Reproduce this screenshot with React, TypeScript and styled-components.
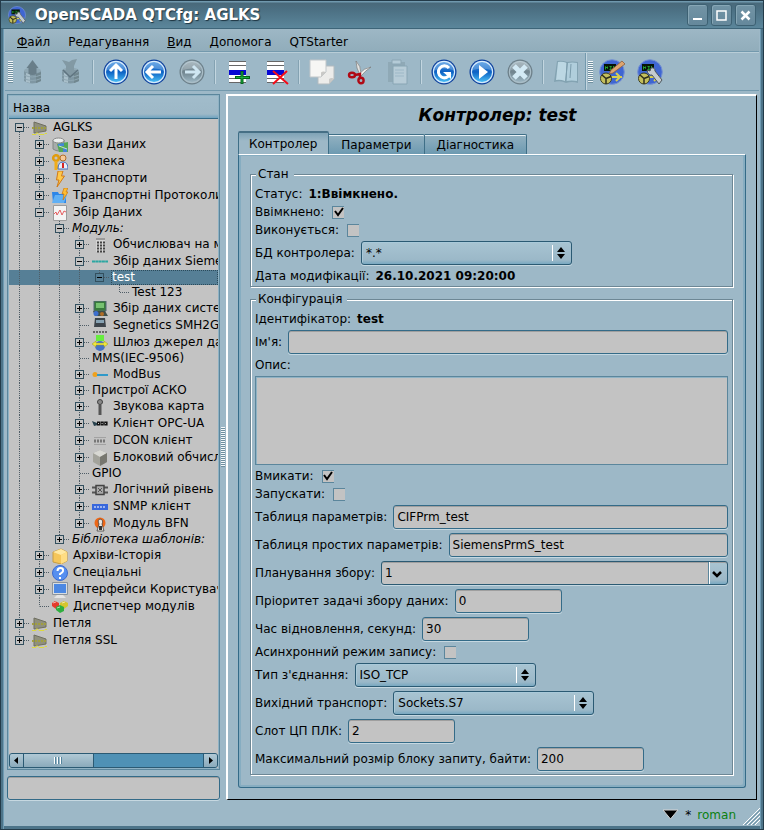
import React from 'react';
import styled, { createGlobalStyle, css } from 'styled-components';

const c = {
  face: '#9db8c7',
  field: '#c3c3c3',
  line: '#5b869c',
  edge: '#346b88',
  deep: '#2b5a73',
  select: '#567f96',
};

const GlobalStyle = createGlobalStyle`
  *, *::before, *::after { box-sizing: border-box; }
  body { margin: 0; background: ${c.face}; }
  body, button, input, select, textarea {
    font-family: "DejaVu Sans", Verdana, sans-serif;
    font-size: 12px;
    color: #000;
  }
  button { padding: 0; border: 0; background: none; }
`;

const Frame = styled.div`
  display: flex;
  flex-direction: column;
  min-height: 100vh;
  padding: 0 4px 4px;
  background: ${c.face};
  border: 1px solid #233b49;
  box-shadow: inset 2px 0 #4d7489, inset 3px 0 #6e9bb3, inset -2px 0 #4d7489, inset -3px 0 #6e9bb3,
    inset 0 -3px #4d7489;
`;

const TitleBar = styled.header`
  display: flex;
  align-items: center;
  gap: 9px;
  height: 28px;
  margin: 0 -4px;
  padding: 0 7px;
  background: linear-gradient(#6f98ad 0 1px, #49697a 2px, #4b6f82 8px, #5b869b 27px, #3e6579 27px);
`;

const Title = styled.h1`
  flex: 1;
  margin: 0;
  font-size: 15px;
  font-weight: bold;
  line-height: 24px;
  color: #fff;
  text-shadow: 1px 1px 1px #1d3441;
`;

const WindowButtons = styled.div`
  display: flex;
  gap: 3px;
`;

const WindowButton = styled.button`
  display: grid;
  place-items: center;
  width: 21px;
  height: 22px;
  border: 1px solid #3d6173;
  border-radius: 3px;
  background: linear-gradient(#7294a5, #65889b);
  box-shadow: inset 1px 1px #86a6b5;
`;

const MenuBar = styled.nav`
  display: flex;
  align-items: center;
  gap: 18px;
  height: 23px;
  padding: 3px 12px 0;
  background: linear-gradient(#9db7c5, #91adbb);
  border-bottom: 1px solid #7399ad;
`;

const MenuItem = styled.button<{ $plain?: boolean }>`
  line-height: 16px;
  &::first-letter { text-decoration: ${(p) => (p.$plain ? 'none' : 'underline')}; }
`;

const ToolArea = styled.div`
  display: flex;
  height: 39px;
  border-top: 1px solid #b8cdd7;
  border-bottom: 1px solid #7399ad;
`;

const ToolBar = styled.div`
  display: flex;
  align-items: center;
  padding-left: 3px;
  & + & { padding-left: 2px; border-left: 1px solid #7399ad; box-shadow: inset 1px 0 #c3d6e0; }
`;

const ToolHandle = styled.span`
  width: 5px;
  height: 22px;
  background: repeating-linear-gradient(#f4f8fa 0 1px, #6f8f9f 1px 2px);
`;

const ToolButton = styled.button`
  display: grid;
  place-items: center;
  width: 38px;
  height: 34px;
  svg { width: 26px; height: 26px; }
`;

const ToolSeparator = styled.span`
  width: 2px;
  height: 24px;
  margin: 0 3px;
  border-left: 1px solid #84a2b2;
  border-right: 1px solid #c3d6e0;
`;

const Body = styled.main`
  flex: 1;
  display: grid;
  grid-template-columns: minmax(180px, 213px) 6px minmax(0, 1fr);
  padding: 3px 2px 0 2px;
`;

const SidePane = styled.aside`
  display: flex;
  flex-direction: column;
  gap: 6px;
  min-width: 0;
`;

const TreeBox = styled.div`
  flex: 1;
  display: flex;
  flex-direction: column;
  background: ${c.field};
  border: 1px solid ${c.line};
  box-shadow: inset 0 0 0 1px #8fb2c4;
  padding: 1px;
`;

const TreeHeader = styled.div`
  height: 23px;
  padding-left: 4px;
  line-height: 24px;
  background: linear-gradient(#a1bccb, #9db8c7 18px, #6fa3bf 22px, ${c.edge} 22px);
`;

const TreeRows = styled.div`
  flex: 1;
  overflow: hidden;
`;

const TreeRow = styled.div<{ $selected?: boolean; $tall?: boolean }>`
  display: flex;
  align-items: center;
  height: ${(p) => (p.$tall ? 17 : 15)}px;
  white-space: nowrap;
  ${(p) => p.$selected && css`background: ${c.select}; color: #fff;`}
`;

const dotsDown = 'repeating-linear-gradient(#4f5d66 0 1px, transparent 1px 2px)';
const dotsAcross = 'repeating-linear-gradient(90deg, #4f5d66 0 1px, transparent 1px 2px)';

type GuideKind = 'none' | 'through' | 'mid' | 'last' | 'first';

const Guide = styled.span<{ $kind: GuideKind }>`
  flex: none;
  display: grid;
  place-items: center start;
  width: 20px;
  height: 100%;
  padding-left: 6px;
  background-repeat: no-repeat;
  ${(p) => p.$kind === 'through' && css`
    background-image: ${dotsDown};
    background-size: 1px 100%;
    background-position: 10px 0;
  `}
  ${(p) => (p.$kind === 'mid' || p.$kind === 'last' || p.$kind === 'first') && css`
    background-image: ${dotsDown}, ${dotsAcross};
    background-size: 1px ${p.$kind === 'mid' ? '100%' : '50%'}, 9px 1px;
    background-position: 10px ${p.$kind === 'first' ? '100%' : '0'}, 11px 50%;
  `}
`;

const Expander = styled.button<{ $selected?: boolean }>`
  display: grid;
  place-items: center;
  width: 9px;
  height: 9px;
  background: ${(p) => (p.$selected ? c.select : c.field)};
  border: 1px solid #33505f;
`;

const TreeIcon = styled.svg`
  flex: none;
  width: 16px;
  height: 16px;
  margin: 0 2px 0 3px;
`;

const TreeLabel = styled.span<{ $italic?: boolean; $selected?: boolean }>`
  flex: 1;
  height: 15px;
  margin-left: 2px;
  padding-left: 1px;
  line-height: 15px;
  font-style: ${(p) => (p.$italic ? 'italic' : 'normal')};
  ${(p) => p.$selected && css`outline: 1px dotted #2b4a5a; outline-offset: -1px;`}
`;

const ScrollBar = styled.div`
  display: flex;
  height: 15px;
  border: 1px solid ${c.deep};
  border-radius: 3px;
  background: #4f91b5;
  overflow: hidden;
`;

const ScrollArrow = styled.button`
  display: grid;
  place-items: center;
  width: 14px;
  background: linear-gradient(#b1c9d5, #8aaabb);
  border: solid ${c.deep};
  border-width: 0 0 0 1px;
  &:first-child { border-width: 0 1px 0 0; }
`;

const ScrollThumb = styled.button`
  display: grid;
  place-items: center;
  width: 34%;
  background: linear-gradient(#b1c9d5, #8aaabb);
  border-right: 1px solid ${c.deep};
`;

const ScrollSpace = styled.span`
  flex: 1;
`;

const fieldFrame = css`
  height: 24px;
  border: 1px solid ${c.edge};
  border-radius: 3px;
  background: ${c.field};
  box-shadow: inset 0 1px #9f9f9f, 0 1px #c6d8e1;
  outline: 0;
`;

const TextInput = styled.input<{ $short?: boolean }>`
  ${fieldFrame}
  min-width: 0;
  padding: 0 3px;
  ${(p) => (p.$short ? css`width: 107px;` : css`flex: 1;`)}
`;

const Splitter = styled.div`
  display: grid;
  place-items: center;
  &::before {
    content: '';
    width: 4px;
    height: 40px;
    background: repeating-linear-gradient(#f4f8fa 0 1px, #6f8f9f 1px 2px);
  }
`;

const Page = styled.section`
  min-width: 0;
  padding: 6px 10px 9px 10px;
  border: 2px solid #fff;
  border-right: 1px solid #000;
  border-bottom: 1px solid #000;
`;

const PageTitle = styled.h2`
  margin: 0 0 3px;
  padding-left: 11px;
  text-align: center;
  font-size: 17px;
  font-style: italic;
  line-height: 26px;
`;

const Tabs = styled.div`
  display: flex;
  align-items: flex-end;
  height: 23px;
`;

const Tab = styled.button<{ $active?: boolean }>`
  height: 20px;
  padding: 0 12px;
  line-height: 18px;
  background: linear-gradient(#92b1c1, #6d9ab1);
  border: solid #3f6f87;
  border-width: 1px 1px 0 0;
  border-radius: 0 2px 0 0;
  box-shadow: inset 0 1px #e9f1f5;
  ${(p) => p.$active && css`
    height: 23px;
    padding: 0 11px 0 10px;
    border-width: 2px 1px 0 1px;
    border-top-color: #466f85;
    border-radius: 2px 2px 0 0;
    background: linear-gradient(#7fa3b6, ${c.face} 8px);
    box-shadow: none;
  `}
`;

const Pane = styled.div`
  display: flex;
  flex-direction: column;
  gap: 4px;
  padding: 11px 12px 12px 11px;
  border: 1px solid ${c.edge};
  border-radius: 0 0 3px 3px;
  border-top-color: #fff;
  box-shadow: inset 2px 1px #86adc1, inset -2px -2px #86adc1;
`;

const Group = styled.fieldset`
  display: flex;
  flex-direction: column;
  gap: 4px;
  min-width: 0;
  margin: 0;
  padding: 5px 4px 3px;
  border: 1px solid #6d8795;
  box-shadow: inset 1px 1px #fff, 1px 1px #fff;
`;

const Legend = styled.legend`
  margin-left: 1px;
  padding: 0 5px 0 2px;
  line-height: 16px;
  background: ${c.face};
`;

const FormRow = styled.div<{ $tall?: boolean }>`
  display: flex;
  align-items: center;
  gap: 6px;
  height: ${(p) => (p.$tall ? 24 : 14)}px;
  white-space: nowrap;
`;

const Value = styled.output`
  font-weight: bold;
`;

const CheckWrap = styled.span`
  display: grid;
  place-items: center;
  margin-left: 2px;
  > * { grid-area: 1 / 1; }
  svg { pointer-events: none; visibility: hidden; }
  input:checked + svg { visibility: visible; }
`;

const Check = styled.input`
  appearance: none;
  width: 12px;
  height: 13px;
  margin: 0;
  background: ${c.field};
  border: solid ${c.line};
  border-width: 1px 0 1px 1px;
`;

const SelectWrap = styled.span<{ $width: number }>`
  display: grid;
  grid-template-columns: minmax(0, 1fr) 20px;
  align-items: center;
  ${(p) => (p.$width ? css`width: ${p.$width}px;` : css`flex: 1;`)}
  select { grid-area: 1 / 1 / 2 / 3; }
  svg { grid-area: 1 / 2; pointer-events: none; }
`;

const Choice = styled.select<{ $editable?: boolean }>`
  ${fieldFrame}
  appearance: none;
  width: 100%;
  padding: 0 22px 0 4px;
  border-color: ${c.deep};
  ${(p) => (p.$editable
    ? css`padding-left: 3px; background: linear-gradient(#a9c4d1, #9db8c7 18px, #78a8c1) right / 19px 100% no-repeat, ${c.field};`
    : css`background: linear-gradient(#a8c4d2, #9bb8c8 18px, #78a8c1); box-shadow: inset 1px 1px #a9c9d9, 0 1px #c6d8e1;`)}
`;

const Memo = styled.textarea`
  height: 89px;
  padding: 3px;
  resize: none;
  background: ${c.field};
  border: 1px solid ${c.line};
  box-shadow: inset 1px 1px #8fb2c4;
  outline: 0;
`;

const StatusBar = styled.footer`
  display: flex;
  align-items: center;
  justify-content: flex-end;
  gap: 6px;
  height: 25px;
  padding-top: 4px;
`;

const UserButton = styled.button`
  color: #0b800f;
  line-height: 20px;
`;

const Grip = styled.svg`
  align-self: flex-end;
  margin-right: -1px;
`;

/* ---------- toolbar drawings ---------- */

const Disc = ({ id, grey, children }: { id: string; grey?: boolean; children: React.ReactNode }) => (
  <svg viewBox="0 0 26 26" aria-hidden="true">
    <defs>
      <linearGradient id={id} x1="0" y1="0" x2="0" y2="1">
        <stop offset="0" stopColor={grey ? '#8fa3ad' : '#3d8ee0'} />
        <stop offset=".5" stopColor={grey ? '#70848e' : '#0d62c4'} />
        <stop offset="1" stopColor={grey ? '#9bb5c2' : '#49bdf4'} />
      </linearGradient>
    </defs>
    <circle cx="13" cy="13" r="12.500" fill={grey ? '#6c7f89' : '#0b3f9c'} />
    <circle cx="13" cy="13" r="11.200" fill={grey ? '#a9bdc7' : '#d3eafc'} />
    <circle cx="13" cy="13" r="10" fill={`url(#${id})`} />
    <path d="M4 11a9 9 0 0 1 18 0q-9-3-18 0z" fill="#fff" opacity=".22" />
    {children}
  </svg>
);

const arrowUp = 'M13 6v14M7 12l6-6 6 6';

const StoreIcon = ({ down }: { down?: boolean }) => (
  <svg viewBox="0 0 26 26" aria-hidden="true">
    <path d="M5 12v10q8 5 17 0V12z" fill="#7f97a3" />
    <path d="M7 14v9l4 1V15z" fill="#a9bfca" />
    <path d="M17 15v9l5-2v-9z" fill="#71878f" />
    <path d="M5 16q8 4 17 0M5 19.500q8 4 17 0" fill="none" stroke="#8fa7b3" />
    <ellipse cx="13.500" cy="11.500" rx="8.500" ry="3" fill="#90a8b4" />
    {down ? (
      <>
        <path d="M5 1l4 1 3 1 3-2 5-1-3 7v4h4l-8 7-8-7h4V7z" fill="#8299a4" />
        <path d="M6 11l7 7 8-7" fill="none" stroke="#5f7480" strokeWidth="1.500" />
      </>
    ) : (
      <path d="M13.500 1l6 8h-2v6q-4 2-8 0V9h-2z" fill="#697e89" />
    )}
  </svg>
);

const RowIcon = ({ remove }: { remove?: boolean }) => (
  <svg viewBox="0 0 26 26" aria-hidden="true">
    <path d="M4 2h17v22H4z" fill="#fff" />
    <path d="M4 2.500h17M4 6.500h17M4 19.500h17M4 23.500h17" stroke="#666" />
    <path d="M4 11h17v5H4z" fill="#0707d4" />
    {remove ? (
      <path d="M10 12l15 13M24 12L10 25" stroke="#f50b18" strokeWidth="2" />
    ) : (
      <>
        <path d="M17 12v13M10 18.500h15" stroke="#05621a" strokeWidth="3" />
        <path d="M17 13v11M11 18.500h13" stroke="#1bb23b" />
      </>
    )}
  </svg>
);

const CopyIcon = () => (
  <svg viewBox="0 0 26 26" aria-hidden="true">
    <path d="M9 7h16v13l-5 5H9z" fill="#ececea" stroke="#b3bbbf" />
    <path d="M25 19.500q-3-1-5 .5v5z" fill="#c9c9c7" />
    <path d="M1 1h16v12l-5 5H1z" fill="#f6f6f4" stroke="#c0c6c9" />
    <path d="M17 13q-3.500-1-5 .5V18z" fill="#c9c9c7" />
  </svg>
);

const CutIcon = () => (
  <svg viewBox="0 0 26 26" aria-hidden="true">
    <path d="M9 2q5 5 5 12l-1 2q-4-7-4-14z" fill="#e4e4e2" stroke="#777" strokeWidth=".7" />
    <path d="M24 8q-7 1-12 7l2 2q4-5 10-9z" fill="#f2f2f0" stroke="#777" strokeWidth=".7" />
    <g fill="none" stroke="#b00914" strokeWidth="2.400">
      <ellipse cx="5" cy="16" rx="3" ry="2.300" />
      <ellipse cx="14" cy="21.500" rx="2.600" ry="2.800" />
      <path d="M8 16l5-1v4" />
    </g>
  </svg>
);

const PasteIcon = () => (
  <svg viewBox="0 0 26 26" aria-hidden="true">
    <path d="M3 3h17v20H3z" fill="#8fa9b6" />
    <path d="M7 1h9v4H7z" fill="#b4cbd7" stroke="#8ba6b4" />
    <path d="M8 7h14v18H8z" fill="#b7ccd7" stroke="#88a5b4" />
    <path d="M10 11h9M10 14h9M10 17h9" stroke="#9db8c7" />
  </svg>
);

const BookIcon = () => (
  <svg viewBox="0 0 26 26" aria-hidden="true">
    <path d="M4 2q5-1 10 1 5-1 11 0v21q-6-2-12 0-5-3-12-1z" fill="#83a3b2" />
    <path d="M5 3q4-1 9 1l-2 18q-5-2-9-1z" fill="#bcd7e3" />
    <path d="M15 4q4-1 9 0v18q-5-1-11 0z" fill="#b0cedc" />
    <path d="M14 3l-1 19M18 5l-1 14" stroke="#7b9cac" />
  </svg>
);

const ScadaIcon = ({ tool }: { tool: 'pencil' | 'wrench' }) => (
  <svg width="18" height="18" viewBox="0 0 26 26" aria-hidden="true">
    <circle cx="13" cy="13" r="12.300" fill="#3f66d2" stroke="#7591d3" />
    <path d="M5 5h12v7H5z" fill="#071407" />
    <path d="M6.500 10.500v-3l2 2v-2M10.500 7.500h2l-1 1.500 1 1.500h-2M14.500 7v4" fill="none" stroke="#239c2f" />
    <path d="M12 18h11M17 14l4 4-4 4" stroke="#d8cf50" strokeWidth="2" fill="none" />
    <circle cx="7" cy="19.500" r="5.500" fill="#c4bf5c" stroke="#3d3d20" />
    <path d="M7 19.500L3 16M7 19.500l5-2M7 19.500V25" stroke="#2d2d1c" strokeWidth="1.500" />
    {tool === 'pencil' ? (
      <path d="M23 2l3 3-12 9-4 1 2-4z" fill="#dda570" stroke="#8b5c3b" strokeWidth=".8" />
    ) : (
      <path d="M10 11l3 1 1-3q4-1 4 3l7 9-3 4-7-9q-4 1-5-5z" fill="#c4cbcf" stroke="#4e565a" />
    )}
  </svg>
);

/* ---------- tree drawings ---------- */

const glyphs: Record<string, React.ReactNode> = {
  station: (
    <>
      <path d="M2 2l12 4v5L2 13z" fill="#90907c" stroke="#6e6e60" />
      <path d="M0 8h15" stroke="#a09e3f" strokeWidth="2" strokeDasharray="2 1" />
      <path d="M0 14.500h4l1-2 2 2h5l1-1h2" fill="none" stroke="#dcd83f" />
    </>
  ),
  db: (
    <>
      <path d="M1 3v9q6 4 11 0V3z" fill="#a8acaa" stroke="#808684" />
      <ellipse cx="6.500" cy="3.500" rx="5.500" ry="2.500" fill="#eceeed" stroke="#888" />
      <path d="M5 7l11-2v10H7z" fill="#54a955" />
      <path d="M6 7l6-1v3H6zM11 11h4v4h-4z" fill="#4585d7" />
      <path d="M7 9l8 3" stroke="#c6e4c8" />
    </>
  ),
  security: (
    <>
      <circle cx="4" cy="4" r="2.800" fill="none" stroke="#e09c10" strokeWidth="2.500" />
      <path d="M4 7v9M4 13h3" stroke="#f0ad1c" strokeWidth="3" />
      <circle cx="11" cy="4" r="3" fill="#f5c998" stroke="#b16f2c" />
      <path d="M6 15q0-7 5-7t5 7z" fill="#e8eef8" stroke="#4870bd" />
      <path d="M11 9v5" stroke="#d52626" strokeWidth="2" />
    </>
  ),
  bolt: <path d="M6 0h5L9.500 5h3L5 16l2-7H4.500z" fill="#ffc94a" stroke="#d07a18" />,
  protocol: (
    <>
      <path d="M0 4h6l1 2h7v9H1z" fill="#2d86e8" />
      <path d="M0 15l3-8h12l-3 8z" fill="#60b0f5" />
      <path d="M12 0h4l-2 4h2l-5 8 1-6h-2z" fill="#ffbd31" stroke="#c97710" strokeWidth=".7" />
    </>
  ),
  daq: (
    <>
      <path d="M1.500.5h13v15h-13z" fill="#f3f3f3" stroke="#9b9b9b" />
      <path d="M2 9l2-2 1 3 3-5 2 5 2-4 2 1" fill="none" stroke="#e34e50" strokeWidth=".9" />
    </>
  ),
  calc: (
    <>
      <path d="M4 1h9v14H4z" fill="#d5d5d5" />
      <path d="M4 2h9" stroke="#999" strokeWidth="2" />
      <path d="M5 5.500h8M5 8.500h8M5 11.500h8M5 14.500h8" stroke="#444" strokeWidth="2" strokeDasharray="2 1" />
    </>
  ),
  siemens: <path d="M0 7.500h16" stroke="#2ba7a2" strokeWidth="2" strokeDasharray="3 .3" />,
  system: (
    <>
      <path d="M2 0h12v10H2z" fill="#397b3c" stroke="#567" />
      <path d="M4 2h8v5H4z" fill="#77c271" />
      <path d="M1 10h12l3 5H3z" fill="#414f4a" />
      <circle cx="4" cy="12.500" r="2.500" fill="#3d6fd0" />
      <circle cx="10" cy="13" r="2" fill="#b06d26" />
    </>
  ),
  smh: (
    <>
      <path d="M3 0h10l1 9H2z" fill="#3c444b" />
      <path d="M4 2h8v3H4z" fill="#87a3b4" />
      <path d="M1 14h14" stroke="#666" strokeWidth="2" strokeDasharray="2 1" />
    </>
  ),
  gate: (
    <>
      <circle cx="8" cy="11" r="5" fill="#4572c5" />
      <path d="M4 0h8v6H4z" fill="#67ed3e" />
      <path d="M0 9l4-3v2h8V6l4 3-4 3v-2H4v2z" fill="#efe83b" stroke="#99952b" strokeWidth=".5" />
    </>
  ),
  modbus: (
    <>
      <circle cx="3" cy="7.500" r="2.500" fill="#f0a11e" />
      <path d="M5 8h11" stroke="#3099c9" strokeWidth="2" />
    </>
  ),
  mic: (
    <>
      <path d="M8 6v10" stroke="#555" strokeWidth="3" />
      <circle cx="8" cy="3" r="2.500" fill="#888" stroke="#3f3f3f" />
    </>
  ),
  opc: (
    <>
      <path d="M0 5l5 2 1 2-4 1z" fill="#27414d" />
      <path d="M5 7.500h11" stroke="#111" strokeWidth="4" strokeDasharray="3.200 .4" />
      <path d="M6 7.500h8" stroke="#ccc" strokeDasharray="1 2.600" />
    </>
  ),
  dcon: (
    <>
      <path d="M2 4.500h12M2 11.500h12" stroke="#a2a2a2" />
      <path d="M2 8h12" stroke="#777" strokeWidth="3" strokeDasharray="2 1" />
    </>
  ),
  block: (
    <>
      <path d="M8 0l7 3v9l-7 4-7-4V3z" fill="#a3a39b" />
      <path d="M8 0l7 3-7 4-7-4z" fill="#d8d8d3" />
      <path d="M8 7l7-4v9l-7 4z" fill="#77776f" />
    </>
  ),
  logic: (
    <>
      <path d="M0 5.500h16M0 10.500h16" stroke="#555" strokeWidth="2" />
      <path d="M4 3.500h8v9H4z" fill="#aaa" stroke="#444" strokeWidth="1.500" />
      <path d="M6 6l4 4M10 6L6 10" stroke="#555" />
    </>
  ),
  snmp: (
    <>
      <path d="M0 5h16v6H0z" fill="#3767dc" />
      <path d="M2 8h12" stroke="#9db5ee" strokeWidth="2" strokeDasharray="2 1" />
    </>
  ),
  bfn: (
    <>
      <circle cx="8" cy="7" r="5.500" fill="#ed6717" />
      <path d="M5 15l2-7q-2-4 1-5 4 1 2 5l2 7z" fill="#e9e5df" stroke="#333" strokeWidth=".7" />
      <path d="M7 10h3v4H7z" fill="#333" />
    </>
  ),
  archive: (
    <>
      <path d="M1 4l8-3 6 3v9l-6 3-8-2z" fill="#f5c65a" stroke="#c79c42" />
      <path d="M1 4l8-3 6 3-6 3z" fill="#ffe9a4" />
      <path d="M9 7l6-3v9l-6 3z" fill="#ffdd83" />
    </>
  ),
  help: (
    <>
      <circle cx="8" cy="8" r="7.500" fill="#568ff0" stroke="#3c6bcf" />
      <path d="M5.500 6q0-3 3-3t2.500 3q0 1-3 3v1M8 12v2" fill="none" stroke="#fff" strokeWidth="2" />
    </>
  ),
  screen: (
    <>
      <path d="M.5.5h15v12H.5z" fill="#d9dde1" stroke="#8c949c" />
      <path d="M2 2h12v9H2z" fill="#4c88e3" />
      <path d="M5 13h6l3 3H2z" fill="#e5e5e5" />
    </>
  ),
  manager: (
    <>
      <path d="M0 4l3-2 4 2v4l-3 2-4-3z" fill="#e53b2d" />
      <path d="M8 4l4-2 4 2v3l-4 3-4-2z" fill="#d6c52f" />
      <path d="M4 8l4-2 4 2v4l-4 2-4-3z" fill="#2fae3f" />
      <path d="M1 4l3-1M10 4l3-1M5 9l3-1" stroke="#fff" opacity=".6" />
    </>
  ),
};

type Node = { text: string; guides: GuideKind[]; icon?: string; open?: boolean; leaf?: boolean; italic?: boolean; selected?: boolean };

const t: GuideKind = 'through';
const under3 = (k: GuideKind): GuideKind[] => [t, t, t, k];

const nodes: Node[] = [
  { text: 'AGLKS', guides: ['first'], icon: 'station', open: true },
  { text: 'Бази Даних', guides: [t, 'mid'], icon: 'db' },
  { text: 'Безпека', guides: [t, 'mid'], icon: 'security' },
  { text: 'Транспорти', guides: [t, 'mid'], icon: 'bolt' },
  { text: 'Транспортні Протоколи', guides: [t, 'mid'], icon: 'protocol' },
  { text: 'Збір Даних', guides: [t, 'mid'], icon: 'daq', open: true },
  { text: 'Модуль:', guides: [t, t, 'mid'], open: true, italic: true },
  { text: 'Обчислювач на мові Java', guides: under3('mid'), icon: 'calc' },
  { text: 'Збір даних Siemens', guides: under3('mid'), icon: 'siemens', open: true },
  { text: 'test', guides: [t, t, t, t, 'last'], open: true, selected: true },
  { text: 'Test 123', guides: [t, t, t, t, 'none', 'last'], leaf: true },
  { text: 'Збір даних системи', guides: under3('mid'), icon: 'system' },
  { text: 'Segnetics SMH2Gi', guides: under3('mid'), icon: 'smh', leaf: true },
  { text: 'Шлюз джерел даних', guides: under3('mid'), icon: 'gate' },
  { text: 'MMS(IEC-9506)', guides: under3('mid'), leaf: true },
  { text: 'ModBus', guides: under3('mid'), icon: 'modbus' },
  { text: 'Пристрої АСКО', guides: under3('mid') },
  { text: 'Звукова карта', guides: under3('mid'), icon: 'mic' },
  { text: 'Клієнт OPC-UA', guides: under3('mid'), icon: 'opc' },
  { text: 'DCON клієнт', guides: under3('mid'), icon: 'dcon' },
  { text: 'Блоковий обчислювач', guides: under3('mid'), icon: 'block' },
  { text: 'GPIO', guides: under3('mid'), leaf: true },
  { text: 'Логічний рівень', guides: under3('mid'), icon: 'logic' },
  { text: 'SNMP клієнт', guides: under3('mid'), icon: 'snmp' },
  { text: 'Модуль BFN', guides: under3('last'), icon: 'bfn' },
  { text: 'Бібліотека шаблонів:', guides: [t, t, 'last'], italic: true },
  { text: 'Архіви-Історія', guides: [t, 'mid'], icon: 'archive' },
  { text: 'Спеціальні', guides: [t, 'mid'], icon: 'help' },
  { text: 'Інтерфейси Користувача', guides: [t, 'mid'], icon: 'screen' },
  { text: 'Диспетчер модулів', guides: [t, 'last'], icon: 'manager', leaf: true },
  { text: 'Петля', guides: ['mid'], icon: 'station' },
  { text: 'Петля SSL', guides: ['last'], icon: 'station' },
];

const TreeItem = ({ node }: { node: Node }) => (
  <TreeRow role="treeitem" aria-selected={!!node.selected} aria-level={node.guides.length} $selected={node.selected} $tall={!!node.icon}>
    {node.guides.map((kind, i) => (
      <Guide key={i} $kind={kind}>
        {i === node.guides.length - 1 && !node.leaf && (
          <Expander $selected={node.selected} aria-label={node.open ? 'Згорнути' : 'Розгорнути'}>
            <svg width="5" height="5" viewBox="0 0 5 5" aria-hidden="true">
              <path d={node.open ? 'M0 2h5v1H0z' : 'M0 2h5v1H0zM2 0h1v5H2z'} />
            </svg>
          </Expander>
        )}
      </Guide>
    ))}
    {node.icon && <TreeIcon viewBox="0 0 16 16" aria-hidden="true">{glyphs[node.icon]}</TreeIcon>}
    <TreeLabel $italic={node.italic} $selected={node.selected}>{node.text}</TreeLabel>
  </TreeRow>
);

/* ---------- form parts ---------- */

const Info = ({ label, value }: { label: string; value: string }) => (
  <FormRow><span>{label}</span><Value>{value}</Value></FormRow>
);

const Flag = ({ id, label, on }: { id: string; label: string; on?: boolean }) => (
  <FormRow>
    <label htmlFor={id}>{label}</label>
    <CheckWrap>
      <Check id={id} type="checkbox" defaultChecked={on} />
      <svg width="11" height="11" viewBox="0 0 11 11" aria-hidden="true">
        <path d="M2 4l3 4 5-7" fill="none" stroke="#000" strokeWidth="2" />
      </svg>
    </CheckWrap>
  </FormRow>
);

const Field = ({ id, label, value, short }: { id: string; label: string; value?: string; short?: boolean }) => (
  <FormRow $tall>
    <label htmlFor={id}>{label}</label>
    <TextInput id={id} defaultValue={value} $short={short} />
  </FormRow>
);

const Pick = ({ id, label, value, width }: { id: string; label: string; value: string; width: number }) => (
  <FormRow $tall>
    <label htmlFor={id}>{label}</label>
    <SelectWrap $width={width}>
      <Choice id={id} $editable={!width}><option>{value}</option></Choice>
      {width ? (
        <svg width="20" height="18" viewBox="0 0 20 18" aria-hidden="true">
          <path d="M0 1h1v16H0z" fill="#fff" />
          <path d="M5 8l4-5 4 5zM5 10l4 5 4-5z" />
        </svg>
      ) : (
        <svg width="20" height="22" viewBox="0 0 20 22" aria-hidden="true">
          <path d="M0 0h1v22H0z" fill={c.line} />
          <path d="M1 0h1v22H1z" fill="#fff" />
          <path d="M5 10l4 4 4-4" fill="none" stroke="#000" strokeWidth="2.500" />
        </svg>
      )}
    </SelectWrap>
  </FormRow>
);

export default function App() {
  return (
    <>
      <GlobalStyle />
      <Frame>
        <TitleBar>
          <ScadaIcon tool="wrench" />
          <Title>OpenSCADA QTCfg: AGLKS</Title>
          <WindowButtons>
            <WindowButton aria-label="Мінімізувати">
              <svg width="11" height="11" viewBox="0 0 11 11"><path d="M1 8h9v2H1z" fill="#fff" /></svg>
            </WindowButton>
            <WindowButton aria-label="Розгорнути вікно">
              <svg width="11" height="11" viewBox="0 0 11 11"><path d="M1 1h9v9H1z" fill="none" stroke="#fff" strokeWidth="1.500" /></svg>
            </WindowButton>
            <WindowButton aria-label="Закрити">
              <svg width="11" height="11" viewBox="0 0 11 11"><path d="M1.500 1.500l8 8M9.500 1.500l-8 8" stroke="#fff" strokeWidth="2.500" /></svg>
            </WindowButton>
          </WindowButtons>
        </TitleBar>

        <MenuBar>
          <MenuItem>Файл</MenuItem>
          <MenuItem $plain>Редагування</MenuItem>
          <MenuItem>Вид</MenuItem>
          <MenuItem>Допомога</MenuItem>
          <MenuItem $plain>QTStarter</MenuItem>
        </MenuBar>

        <ToolArea>
          <ToolBar>
            <ToolHandle />
            <ToolButton aria-label="Завантажити" disabled><StoreIcon /></ToolButton>
            <ToolButton aria-label="Зберегти" disabled><StoreIcon down /></ToolButton>
            <ToolSeparator />
            <ToolButton aria-label="Вгору">
              <Disc id="up"><path d={arrowUp} fill="none" stroke="#fff" strokeWidth="3" /></Disc>
            </ToolButton>
            <ToolButton aria-label="Назад">
              <Disc id="back"><path d={arrowUp} transform="rotate(-90 13 13)" fill="none" stroke="#fff" strokeWidth="3" /></Disc>
            </ToolButton>
            <ToolButton aria-label="Вперед" disabled>
              <Disc id="next" grey><path d={arrowUp} transform="rotate(90 13 13)" fill="none" stroke="#cfe6f2" strokeWidth="3" /></Disc>
            </ToolButton>
            <ToolSeparator />
            <ToolButton aria-label="Додати"><RowIcon /></ToolButton>
            <ToolButton aria-label="Видалити"><RowIcon remove /></ToolButton>
            <ToolSeparator />
            <ToolButton aria-label="Копіювати"><CopyIcon /></ToolButton>
            <ToolButton aria-label="Вирізати"><CutIcon /></ToolButton>
            <ToolButton aria-label="Вставити" disabled><PasteIcon /></ToolButton>
            <ToolSeparator />
            <ToolButton aria-label="Оновити">
              <Disc id="reload">
                <path d="M18 9a6 6 0 1 0 1 6" fill="none" stroke="#fff" strokeWidth="3" />
                <path d="M12 13h8v7z" fill="#fff" />
              </Disc>
            </ToolButton>
            <ToolButton aria-label="Запустити"><Disc id="play"><path d="M10 6l9 7-9 7z" fill="#fff" /></Disc></ToolButton>
            <ToolButton aria-label="Зупинити" disabled>
              <Disc id="stop" grey><path d="M7 7l12 12M19 7L7 19" stroke="#d3eaf5" strokeWidth="5" /></Disc>
            </ToolButton>
            <ToolSeparator />
            <ToolButton aria-label="Посібник" disabled><BookIcon /></ToolButton>
          </ToolBar>
          <ToolBar>
            <ToolHandle />
            <ToolButton aria-label="Візуалізатор"><ScadaIcon tool="pencil" /></ToolButton>
            <ToolButton aria-label="Конфігуратор"><ScadaIcon tool="wrench" /></ToolButton>
          </ToolBar>
        </ToolArea>

        <Body>
          <SidePane>
            <TreeBox>
              <TreeHeader>Назва</TreeHeader>
              <TreeRows role="tree" aria-label="Назва">
                {nodes.map((n) => <TreeItem key={n.text} node={n} />)}
              </TreeRows>
              <ScrollBar>
                <ScrollArrow aria-label="Ліворуч"><svg width="5" height="7" viewBox="0 0 5 7"><path d="M4 0v7L0 3.500z" /></svg></ScrollArrow>
                <ScrollThumb aria-label="Прокрутка">
                  <svg width="9" height="7" viewBox="0 0 9 7">
                    <path d="M0 0h1v7H0zM3 0h1v7H3zM6 0h1v7H6z" fill="#fff" />
                    <path d="M1 0h1v7H1zM4 0h1v7H4zM7 0h1v7H7z" fill="#54859e" />
                  </svg>
                </ScrollThumb>
                <ScrollSpace />
                <ScrollArrow aria-label="Праворуч"><svg width="5" height="7" viewBox="0 0 5 7"><path d="M1 0v7l4-3.500z" /></svg></ScrollArrow>
              </ScrollBar>
            </TreeBox>
            <FormRow $tall><TextInput aria-label="Пошук" /></FormRow>
          </SidePane>
          <Splitter />
          <Page>
            <PageTitle>Контролер: test</PageTitle>
            <Tabs role="tablist">
              <Tab role="tab" aria-selected="true" $active>Контролер</Tab>
              <Tab role="tab" aria-selected="false">Параметри</Tab>
              <Tab role="tab" aria-selected="false">Діагностика</Tab>
            </Tabs>
            <Pane role="tabpanel">
              <Group>
                <Legend>Стан</Legend>
                <Info label="Статус:" value="1:Ввімкнено." />
                <Flag id="enabled" label="Ввімкнено:" on />
                <Flag id="running" label="Виконується:" />
                <Pick id="storage" label="БД контролера:" value="*.*" width={211} />
                <Info label="Дата модифікації:" value="26.10.2021 09:20:00" />
              </Group>
              <Group>
                <Legend>Конфігурація</Legend>
                <Info label="Ідентифікатор:" value="test" />
                <Field id="name" label="Ім'я:" />
                <FormRow><label htmlFor="descr">Опис:</label></FormRow>
                <Memo id="descr" />
                <Flag id="toEnable" label="Вмикати:" on />
                <Flag id="toStart" label="Запускати:" />
                <Field id="prmTable" label="Таблиця параметрів:" value="CIFPrm_test" />
                <Field id="simpleTable" label="Таблиця простих параметрів:" value="SiemensPrmS_test" />
                <Pick id="schedule" label="Планування збору:" value="1" width={0} />
                <Field id="priority" label="Пріоритет задачі збору даних:" value="0" short />
                <Field id="restore" label="Час відновлення, секунд:" value="30" short />
                <Flag id="async" label="Асинхронний режим запису:" />
                <Pick id="connection" label="Тип з'єднання:" value="ISO_TCP" width={181} />
                <Pick id="transport" label="Вихідний транспорт:" value="Sockets.S7" width={201} />
                <Field id="slot" label="Слот ЦП ПЛК:" value="2" short />
                <Field id="blockSize" label="Максимальний розмір блоку запиту, байти:" value="200" short />
              </Group>
            </Pane>
          </Page>
        </Body>

        <StatusBar>
          <svg width="17" height="11" viewBox="0 0 17 11" aria-hidden="true">
            <path d="M1 1h15L8.500 10z" fill="#000" stroke="#d5d5d5" />
          </svg>
          <span>*</span>
          <UserButton>roman</UserButton>
          <Grip width="18" height="18" viewBox="0 0 18 18" aria-hidden="true">
            <path d="M1 18L18 1M5 18L18 5M9 18l9-9M13 18l5-5" stroke="#fff" />
            <path d="M3 18L18 3M7 18L18 7M11 18l7-7" stroke="#6f95a8" />
          </Grip>
        </StatusBar>
      </Frame>
    </>
  );
}
